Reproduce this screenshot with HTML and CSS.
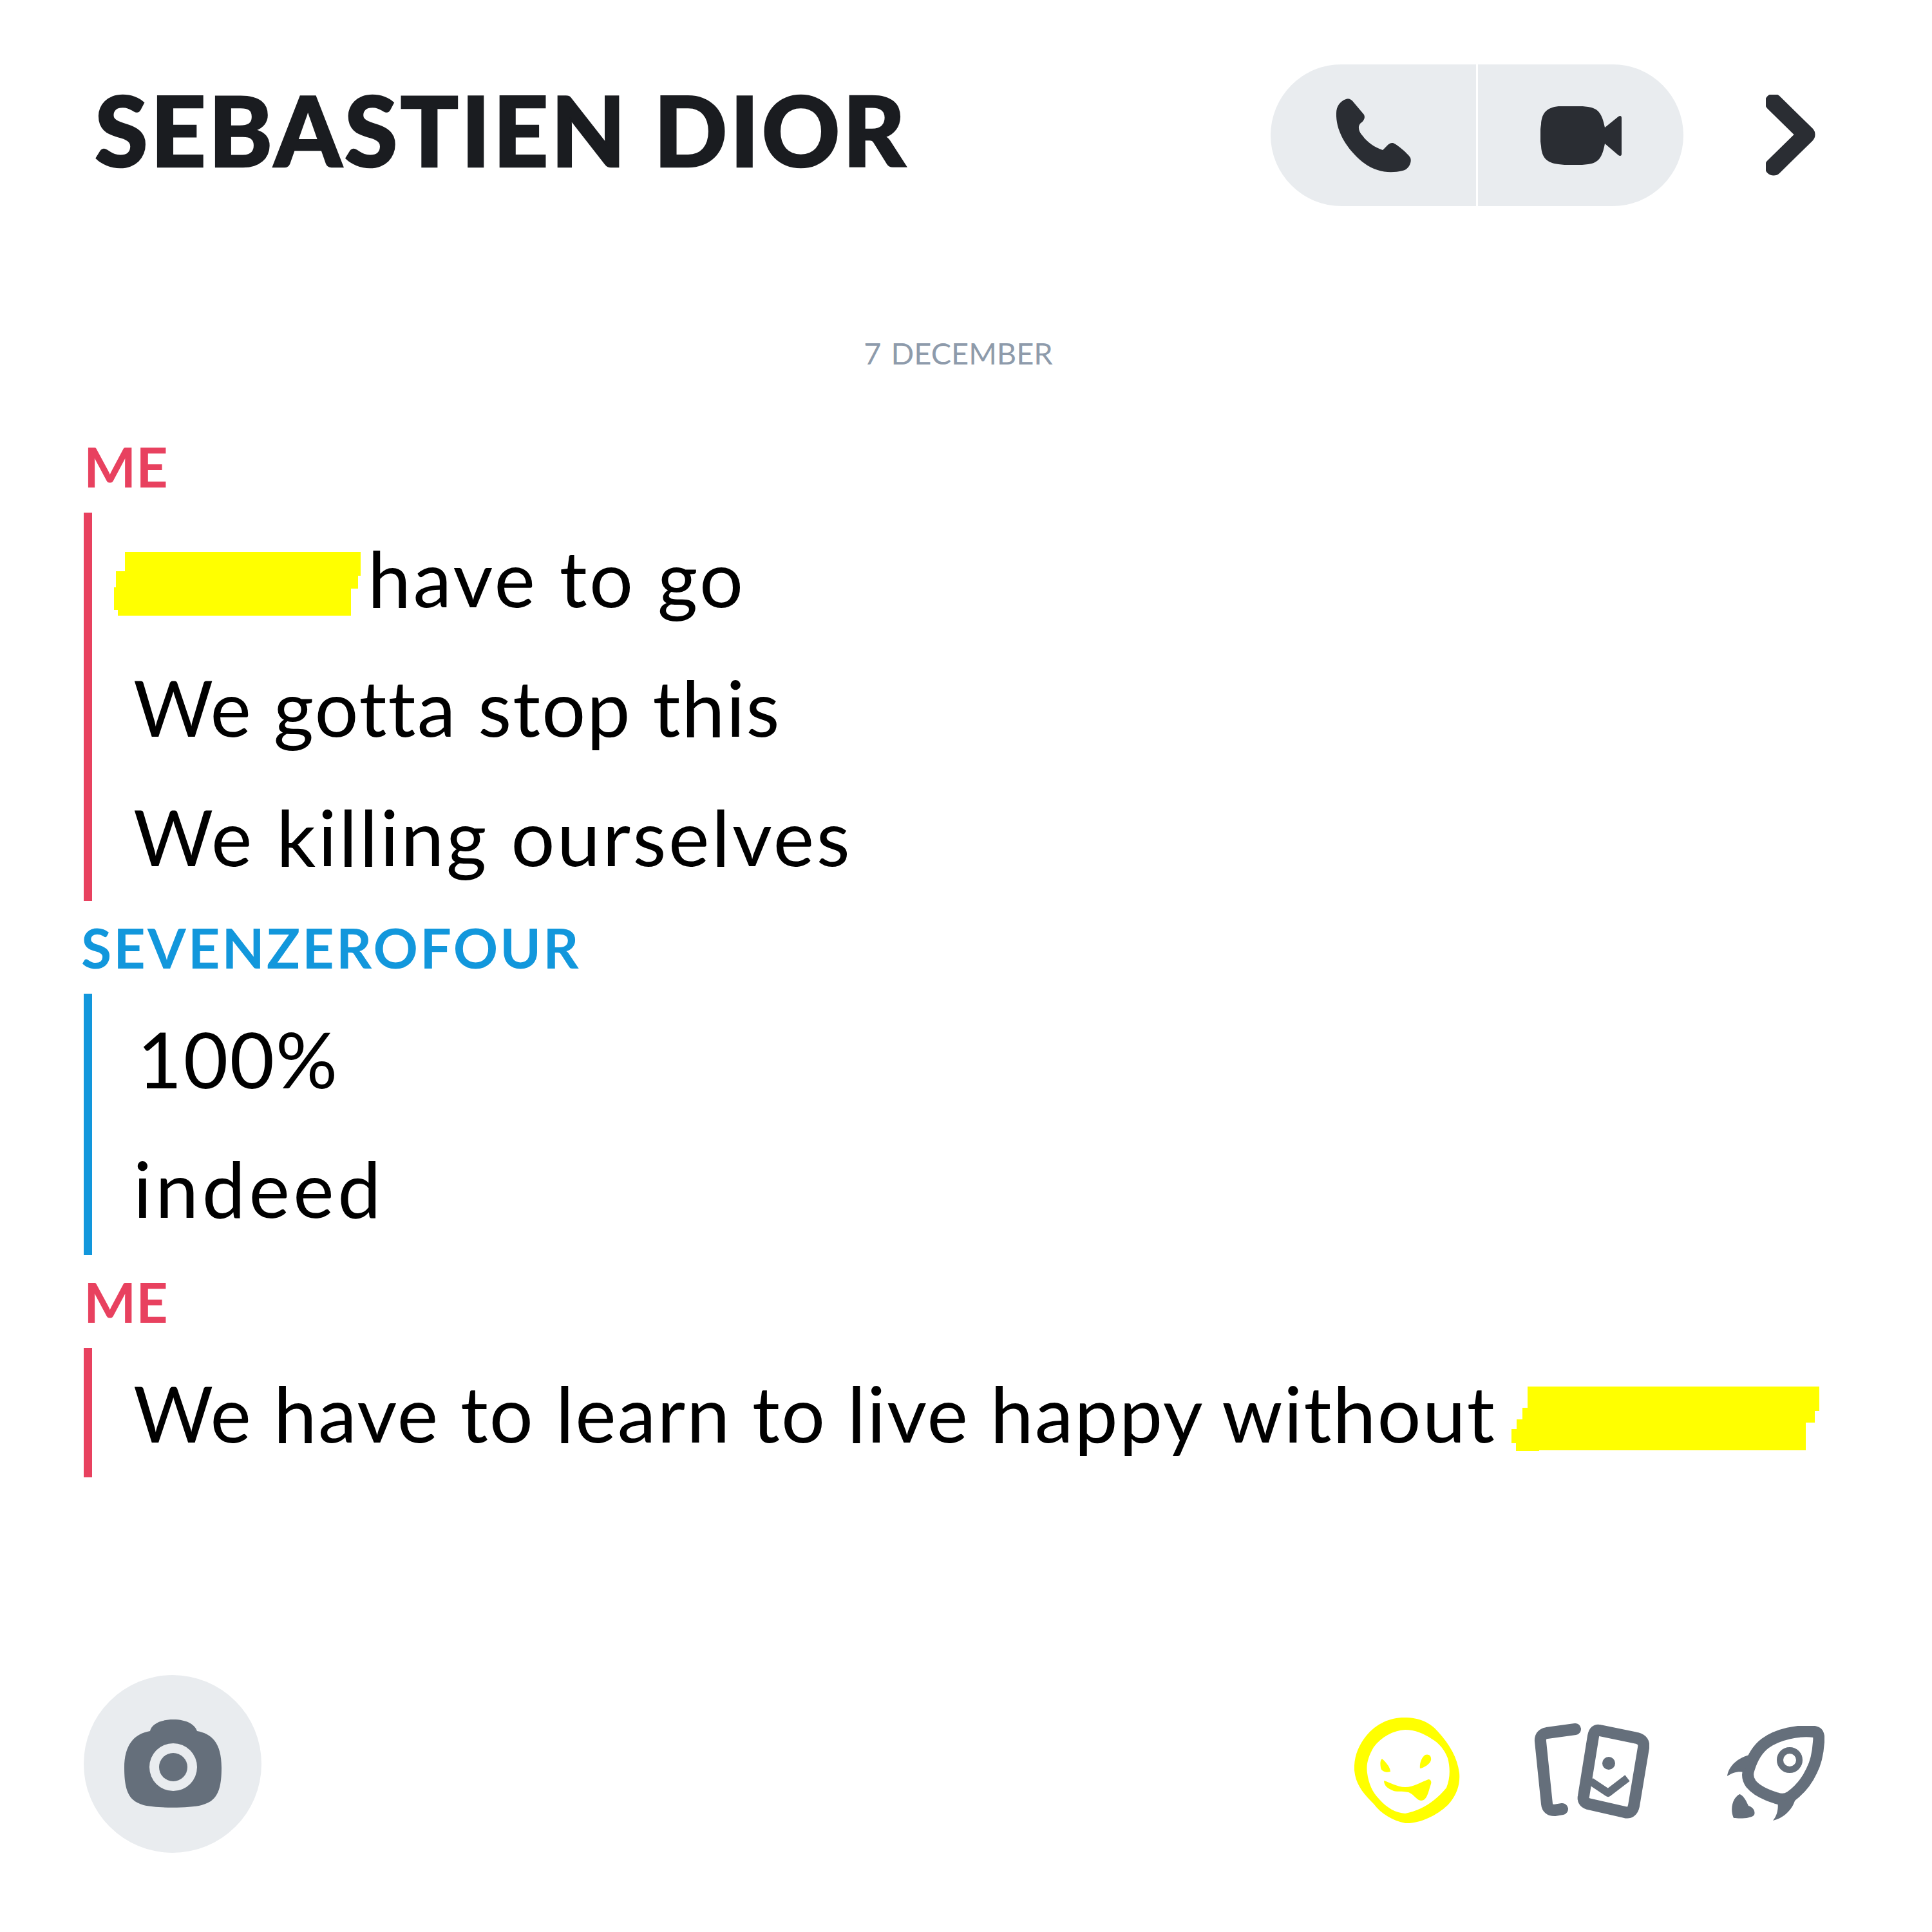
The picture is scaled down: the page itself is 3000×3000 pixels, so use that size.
FILE: index.html
```html
<!DOCTYPE html>
<html lang="en">
<head>
<meta charset="utf-8">
<title>Chat</title>
<link rel="stylesheet" href="styles.css">
</head>
<body>
<div class="screen">
  <header class="header">
    <h1 class="title">SEBASTIEN DIOR</h1>
    <div class="actions">
      <div class="pill">
        <div class="seg">
          <svg class="ic-phone" viewBox="0 0 116 115"><path class="dark" d="M15 1C20-1 24 2 27 6L43 25C46 31 41 36 37 39C33 44 35 52 41 58C48 68 60 76 72 80C77 76 81 68 88 69C94 71 112 86 115 92C118 100 111 111 103 112C82 117 60 114 40 98C16 78-1 50 0 23C0 12 6 4 15 1Z"/></svg>
        </div>
        <div class="seg seg-right">
          <svg class="ic-video" viewBox="0 0 126 91"><path class="dark" d="M28 0C50-1 60-1 74 1C90 3 96 12 100 33L121 16C124 14 126 15 126 18V74C126 77 124 78 121 76L100 58C96 80 90 88 74 90C60 92 42 92 28 90C10 88 2 80 1 62C-1 50-1 40 1 28C2 10 10 2 28 0Z"/></svg>
        </div>
      </div>
      <svg class="ic-chevron" viewBox="0 0 78 126"><path class="chev" d="M12 12L63 62L12 112"/></svg>
    </div>
  </header>

  <div class="date">7 DECEMBER</div>

  <section class="thread">
    <div class="label label-red">ME</div>
    <div class="block block-red">
      <div class="row row-first row-loose"><svg class="blob blob-a" viewBox="0 0 383 99"><path class="yellow" d="M17 0H383V37H379V57H368V99H6V90H0V55H3V30H17Z"/></svg>have to go</div>
      <div class="row">We gotta stop this</div>
      <div class="row row-loose">We killing ourselves</div>
    </div>
  </section>

  <section class="thread">
    <div class="label label-blue">SEVENZEROFOUR</div>
    <div class="block block-blue">
      <div class="row row-num">100%</div>
      <div class="row row-wide">indeed</div>
    </div>
  </section>

  <section class="thread">
    <div class="label label-red">ME</div>
    <div class="block block-red">
      <div class="row">We have to learn to live happy without<svg class="blob blob-b" viewBox="0 0 478 100"><path class="yellow" d="M25 0H478V38H471V56H457V99H43V100H7V88H0V66H8V51H17V33H25Z"/></svg></div>
    </div>
  </section>

  <footer class="footer">
    <div class="cam">
      <svg class="ic-camera" viewBox="0 0 151 138"><path class="slate" fill-rule="evenodd" d="M40 18C42 8 55 0 76 0C97 0 110 8 113 18C135 22 151 35 151 75C151 112 143 127 120 133C100 138 50 138 30 133C8 127 0 112 0 75C0 40 15 22 40 18ZM76 37A37 37 0 1 0 76 111A37 37 0 1 0 76 37Z"/><circle class="slate" cx="76" cy="74" r="22"/></svg>
    </div>
    <div class="tools">
      <svg class="ic-smile" viewBox="0 0 164 165">
        <path class="yellow" fill-rule="evenodd" d="M77 0C102 0 118 8 130 22C148 42 160 62 163 86C165 108 156 124 145 136C128 152 102 165 79 164C60 160 42 150 30 134C14 118 2 104 0 82C-1 62 6 44 18 29C34 9 56 0 77 0ZM79 19C60 20 42 30 30 46C22 60 18 72 20 86C22 102 28 116 38 126C50 140 64 148 79 149C104 144 126 130 143 109C149 94 149 78 145 63C140 50 132 40 120 33C108 25 94 19 79 19Z"/>
        <path class="yellow" d="M43 64C50 70 56 78 56 84C50 86 42 84 41 78C40 72 40 66 43 64ZM110 58C116 56 120 60 119 66C118 72 108 78 102 79C101 72 104 62 110 58ZM46 98C54 100 66 108 79 108C92 108 104 100 115 96C119 96 120 100 119 103C116 112 114 122 110 126C106 130 102 129 100 128C94 124 90 118 84 116C74 114 64 116 59 113C52 110 46 106 46 98Z"/>
      </svg>
      <svg class="ic-cards" viewBox="0 0 179 148">
        <path class="line" d="M64 9L20 15Q9 17 10 28L20 125Q21 135 32 135L44 133"/>
        <path class="line" d="M102 11L160 23Q172 26 170 38L155 128Q152 141 141 138L84 125Q75 122 77 113L92 20Q94 9 102 11Z"/>
        <circle class="slate" cx="116" cy="62" r="10"/>
        <path class="line-thin" d="M88 90L115 108L145 85"/>
      </svg>
      <svg class="ic-rocket" viewBox="0 0 151 147">
        <path class="line" d="M135 9C142 10 143 16 142 25C141 40 139 55 131 70C124 85 112 100 98 110C92 114 84 115 76 112C60 107 45 100 37 90C31 82 31 74 34 66C39 50 47 36 59 27C78 13 110 6 135 9Z"/>
        <circle class="ring" cx="97" cy="53" r="15"/>
        <path class="slate" d="M0 78C2 62 18 46 45 43C34 54 30 62 27 72C16 70 8 73 0 78Z"/>
        <path class="slate" d="M107 106C106 124 92 142 71 147C78 138 80 128 78 116C88 118 98 114 107 106Z"/>
        <path class="slate" d="M19 106C26 108 30 118 33 124C40 126 44 132 42 138C38 144 20 144 10 143C5 132 6 114 19 106Z"/>
      </svg>
    </div>
  </footer>
</div>
</body>
</html>
```

FILE: styles.css
```css
* { box-sizing: border-box; }
html, body { margin: 0; padding: 0; background: #fff; }
svg { display: block; flex: none; }

.screen {
  width: 3000px;
  height: 3000px;
  padding: 100px 0 123px 130px;
  display: flex;
  flex-direction: column;
  font-family: "Lato", "Liberation Sans", sans-serif;
  color: #000;
}

.header {
  height: 220px;
  display: flex;
  align-items: center;
  justify-content: space-between;
  padding-right: 180px;
}
.title {
  margin: 0;
  padding: 0 0 18px 17px;
  font-size: 150px;
  font-weight: 900;
  color: #1a1c20;
  line-height: 1;
  letter-spacing: 4px;
  -webkit-text-stroke: 2.5px #1a1c20;
}
.actions { display: flex; align-items: center; gap: 128px; }
.pill {
  width: 641px;
  height: 220px;
  display: flex;
  background: #e9ecef;
  border-radius: 110px;
  overflow: hidden;
}
.seg { flex: 1; display: flex; align-items: center; justify-content: center; }
.seg-right { border-left: 3px solid #fff; }
.ic-phone { width: 116px; height: 115px; }
.ic-video { width: 126px; height: 91px; }
.ic-chevron { width: 78px; height: 126px; }
.dark { fill: #2a2d33; }
.chev { fill: none; stroke: #2a2d33; stroke-width: 27; stroke-linecap: round; stroke-linejoin: round; }

.date {
  margin-top: 201px;
  height: 54px;
  line-height: 54px;
  padding-right: 154px;
  text-align: center;
  font-size: 47px;
  word-spacing: 3px;
  color: #8e9bab;
}

.thread { margin-top: 24px; }
.date + .thread { margin-top: 101px; }

.label {
  height: 96px;
  line-height: 96px;
  font-size: 86px;
  font-weight: 700;
  margin-bottom: 24px;
}
.label-red { color: #e8415f; }
.label-blue { color: #1297dc; margin-left: -4px; letter-spacing: 3.2px; }

.block { border-left: 13px solid; padding-left: 64px; }
.block-red { border-color: #e8415f; }
.block-blue { border-color: #1297dc; padding-bottom: 4px; }

.row {
  height: 201px;
  line-height: 1.2;
  font-size: 120px;
  letter-spacing: 2.1px;
  white-space: nowrap;
  display: flex;
  align-items: center;
}
.row-loose { letter-spacing: 3.6px; }
.row-wide { letter-spacing: 5.5px; }
.row-first { margin-left: -30px; }
.row-num { padding-left: 6px; }

.yellow { fill: #ffff00; }
.blob-a { width: 383px; height: 99px; margin: 20px 11px 0 0; }
.blob-b { width: 478px; height: 100px; margin: 18px 0 0 24px; }

.footer {
  margin-top: auto;
  display: flex;
  align-items: center;
  justify-content: space-between;
  padding-right: 167px;
}
.cam {
  width: 276px;
  height: 276px;
  border-radius: 50%;
  background: #e9ecef;
  display: flex;
  align-items: center;
  justify-content: center;
}
.ic-camera { width: 151px; height: 138px; }
.tools { display: flex; align-items: center; gap: 118px; margin-top: 20px; }
.ic-smile { width: 164px; height: 165px; }
.ic-cards { width: 179px; height: 148px; margin: 2px 3px 0 -3px; }
.ic-rocket { width: 151px; height: 147px; margin-top: 8px; }
.slate { fill: #656f7b; }
.line { fill: none; stroke: #656f7b; stroke-width: 18; stroke-linecap: round; stroke-linejoin: round; }
.line-thin { fill: none; stroke: #656f7b; stroke-width: 12; stroke-linejoin: round; }
.ring { fill: none; stroke: #656f7b; stroke-width: 10; }
```
